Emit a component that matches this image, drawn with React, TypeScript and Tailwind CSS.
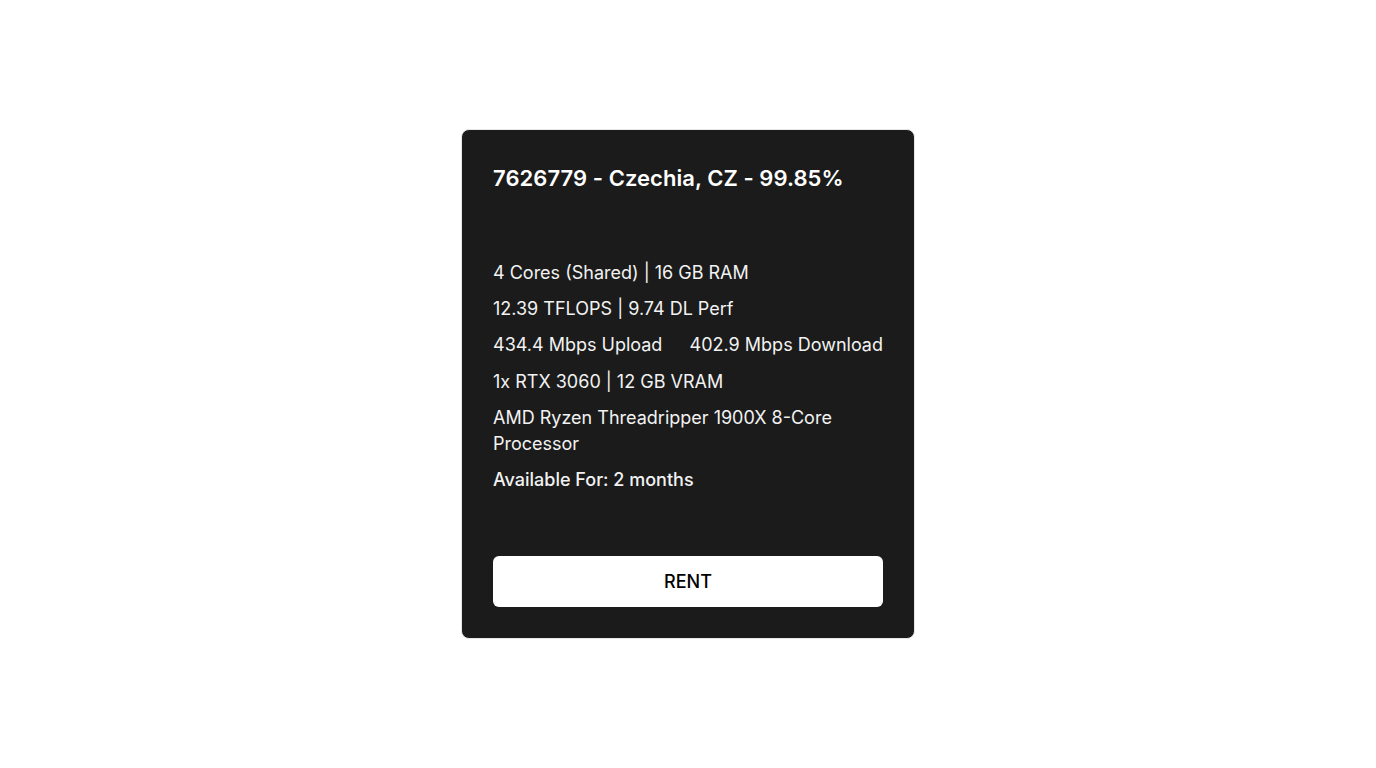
const rows = [
  '4 Cores (Shared) | 16 GB RAM',
  '12.39 TFLOPS | 9.74 DL Perf',
];

const App = () => {
  return (
    <div className="w-full h-screen flex items-center justify-center bg-white" style={{ fontFamily: 'Inter, "Noto Sans", sans-serif' }}>
      <div className="w-[454px] rounded-lg border border-gray-200 bg-[#1b1b1b] p-[31px] text-white">
        <h2 className="text-[22px] leading-[34px] font-semibold tracking-[0.05px]">7626779 - Czechia, CZ - 99.85%</h2>

        <div className="mt-[65px] flex flex-col gap-[10.4px] text-[18px] leading-[26px] text-[#f2f2f2]">
          {rows.map((row, key) => (
            <div key={key}>{row}</div>
          ))}
          <div className="flex justify-between">
            <span>434.4 Mbps Upload</span>
            <span>402.9 Mbps Download</span>
          </div>
          <div>1x RTX 3060 | 12 GB VRAM</div>
          <div>AMD Ryzen Threadripper 1900X 8-Core Processor</div>
          <div className="font-medium">Available For: 2 months</div>
        </div>

        <button
          type="button"
          className="mt-[63px] w-full h-[51px] rounded-md bg-white text-[18px] font-medium text-black"
        >
          RENT
        </button>
      </div>
    </div>
  );
};

export default App;
